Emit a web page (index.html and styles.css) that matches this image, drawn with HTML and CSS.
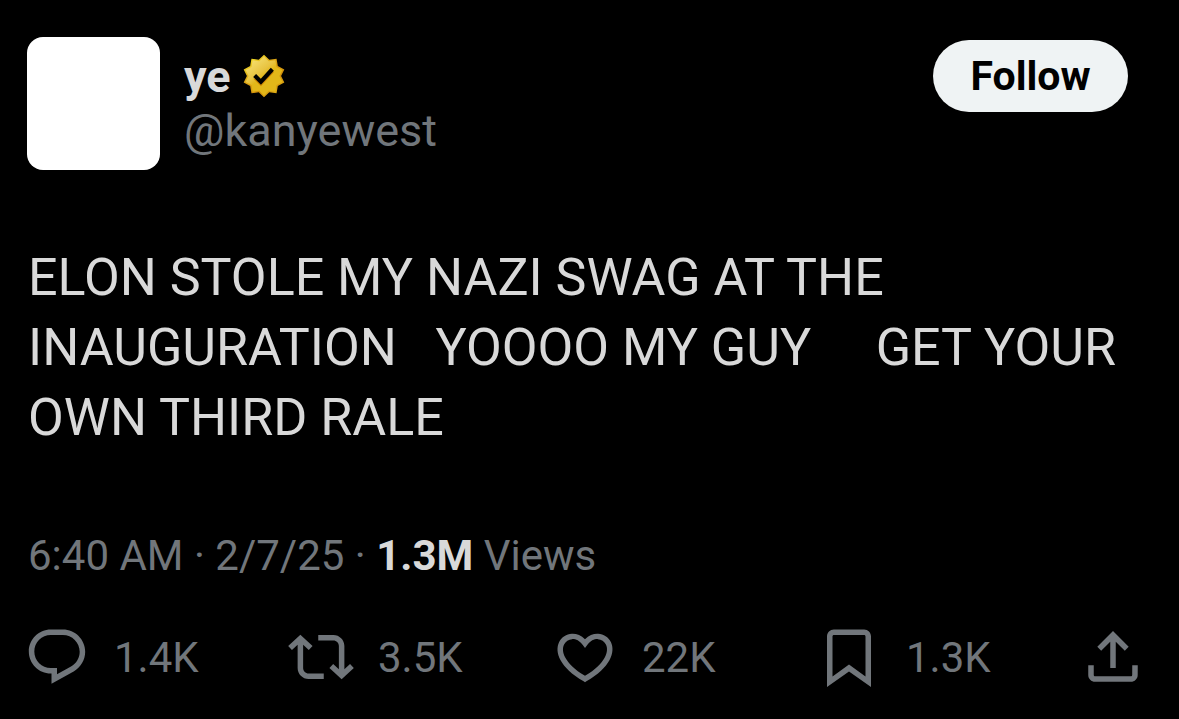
FILE: index.html
```html
<!DOCTYPE html>
<html lang="en">
<head>
    <meta charset="UTF-8">
    <meta name="viewport" content="width=device-width, initial-scale=1.0">
    <title>ye (@kanyewest)</title>
    <link rel="stylesheet" href="styles.css">
</head>
<body>
    <article class="post">
        <header class="post-header">
            <div class="avatar"></div>
            <div class="author">
                <div class="name-row">
                    <span class="name">ye</span>
                    <svg class="badge" viewBox="0 0 22 22" aria-hidden="true">
                        <defs>
                            <linearGradient id="rim" x1="4" y1="2" x2="18" y2="20" gradientUnits="userSpaceOnUse">
                                <stop offset="0" stop-color="#f4e72a"/>
                                <stop offset="0.4" stop-color="#dba012"/>
                                <stop offset="0.7" stop-color="#d18f0a"/>
                                <stop offset="1" stop-color="#e2b719"/>
                            </linearGradient>
                            <linearGradient id="gold" x1="4" y1="2" x2="18" y2="20" gradientUnits="userSpaceOnUse">
                                <stop offset="0" stop-color="#f9e87f"/>
                                <stop offset="0.4" stop-color="#e8c340"/>
                                <stop offset="0.5" stop-color="#e2b719"/>
                                <stop offset="1" stop-color="#e2b719"/>
                            </linearGradient>
                        </defs>
                        <path fill="url(#rim)" d="M13.324 3.848L11 1.6 8.676 3.848l-3.201-.453-.559 3.184L2.06 8.095 3.48 11l-1.42 2.904 2.856 1.516.559 3.184 3.201-.452L11 20.4l2.324-2.248 3.201.452.559-3.184 2.856-1.516L18.52 11l1.42-2.905-2.856-1.516-.559-3.184z"/>
                        <path fill="url(#gold)" d="M13.1 4.5L11 2.4 8.9 4.5l-2.9-.4-.5 2.9-2.6 1.4L4.2 11l-1.3 2.6L5.5 15l.5 2.9 2.9-.4L11 19.6l2.1-2.1 2.9.4.5-2.9 2.6-1.4L17.8 11l1.3-2.6L16.5 7 16 4.1z"/>
                        <path fill="#d18800" d="M6.234 12.1l3.428 3.428 5.683-6.206L14 8.2l-4.4 4.7z"/>
                        <path fill="#000" d="M6.234 11.423l3.428 3.428 5.683-6.206-1.347-1.247-4.4 4.795-2.072-2.072z"/>
                    </svg>
                </div>
                <div class="handle">@kanyewest</div>
            </div>
            <button class="follow" type="button">Follow</button>
        </header>

        <p class="text">ELON STOLE MY NAZI SWAG AT THE INAUGURATION   YOOOO MY GUY     GET YOUR OWN THIRD RALE</p>

        <div class="meta">6:40 AM · 2/7/25 · <strong>1.3M</strong> Views</div>

        <!-- Action buttons -->
        <div class="actions">
            <button class="action" type="button" aria-label="Reply, 1.4K">
                <svg viewBox="0 0 24 24"><path d="M1.751 10c0-4.42 3.584-8 8.005-8h4.366c4.49 0 8.129 3.64 8.129 8.13 0 2.96-1.607 5.68-4.196 7.11l-8.054 4.46v-3.69h-.067c-4.49.1-8.183-3.51-8.183-8.01zm8.005-6c-3.317 0-6.005 2.69-6.005 6 0 3.37 2.77 6.08 6.138 6.01l.351-.01h1.761v2.3l5.087-2.81c1.951-1.08 3.163-3.13 3.163-5.36 0-3.39-2.744-6.13-6.129-6.13H9.756z"/></svg>
                <span>1.4K</span>
            </button>
            <button class="action" type="button" aria-label="Repost, 3.5K">
                <svg viewBox="0 0 24 24"><path d="M4.5 3.88l4.432 4.14-1.364 1.46L5.5 7.55V16c0 1.1.896 2 2 2H13v2H7.5c-2.209 0-4-1.79-4-4V7.55L1.432 9.48.068 8.02 4.5 3.88zM16.5 6H11V4h5.5c2.209 0 4 1.79 4 4v8.45l2.068-1.93 1.364 1.46-4.432 4.14-4.432-4.14 1.364-1.46 2.068 1.93V8c0-1.1-.896-2-2-2z"/></svg>
                <span>3.5K</span>
            </button>
            <button class="action" type="button" aria-label="Like, 22K">
                <svg viewBox="0 0 24 24"><path d="M16.697 5.5c-1.222-.06-2.679.51-3.89 2.16l-.805 1.09-.806-1.09C9.984 6.01 8.526 5.44 7.304 5.5c-1.243.07-2.349.78-2.91 1.91-.552 1.12-.633 2.78.479 4.82 1.074 1.97 3.257 4.27 7.129 6.61 3.87-2.34 6.052-4.64 7.126-6.61 1.111-2.04 1.03-3.7.477-4.82-.561-1.13-1.666-1.84-2.908-1.91zm4.187 7.69c-1.351 2.48-4.001 5.12-8.379 7.67l-.503.3-.504-.3c-4.379-2.55-7.029-5.19-8.382-7.67-1.36-2.5-1.41-4.86-.514-6.67.887-1.79 2.647-2.91 4.601-3.01 1.651-.09 3.368.56 4.798 2.01 1.429-1.45 3.146-2.1 4.796-2.01 1.954.1 3.714 1.22 4.601 3.01.896 1.81.846 4.17-.514 6.67z"/></svg>
                <span>22K</span>
            </button>
            <button class="action" type="button" aria-label="Bookmark, 1.3K">
                <svg viewBox="0 0 24 24"><path d="M4 4.5C4 3.12 5.119 2 6.5 2h11C18.881 2 20 3.12 20 4.5v18.44l-8-5.71-8 5.71V4.5zM6.5 4c-.276 0-.5.22-.5.5v14.56l6-4.29 6 4.29V4.5c0-.28-.224-.5-.5-.5h-11z"/></svg>
                <span>1.3K</span>
            </button>
            <button class="action" type="button" aria-label="Share">
                <svg viewBox="0 0 24 24"><path d="M12 2.59l5.7 5.7-1.41 1.42L13 6.41V16h-2V6.41l-3.3 3.3-1.41-1.42L12 2.59zM21 15l-.02 3.51c0 1.38-1.12 2.49-2.5 2.49H5.5C4.11 21 3 19.88 3 18.5V15h2v3.5c0 .28.22.5.5.5h12.98c.28 0 .5-.22.5-.5L19 15h2z"/></svg>
            </button>
        </div>
    </article>
</body>
</html>
```
FILE: styles.css
```css
body {
    margin: 0;
    background-color: #000;
    color: #d9d9d9;
    font-family: Roboto, Arial, sans-serif;
}
button {
    border: none;
    padding: 0;
    font-family: inherit;
    cursor: pointer;
}
.post {
    padding: 37px 24px 29px;
}
.post-header {
    display: flex;
    align-items: flex-start;
    padding: 0 27px 0 3px;
}
.avatar {
    width: 133px;
    height: 133px;
    border-radius: 16px;
    background-color: #fff;
}
.author {
    flex-grow: 1;
    margin-left: 24px;
    padding-top: 12px;
}
.name-row {
    display: flex;
    align-items: center;
    gap: 8px;
    height: 54px;
}
.name {
    font-size: 45px;
    font-weight: 700;
}
.badge {
    width: 50px;
    height: 50px;
}
.handle {
    font-size: 45px;
    line-height: 56px;
    color: #71767b;
}
.follow {
    width: 195px;
    height: 72px;
    margin-top: 3px;
    border-radius: 36px;
    background-color: #eff3f4;
    color: #000;
    font-size: 41px;
    font-weight: 700;
}
.text {
    margin: 73px 0 0;
    padding: 0 20px 0 4px;
    font-size: 52px;
    line-height: 70px;
    white-space: pre-wrap;
}
.meta {
    margin-top: 76px;
    padding-left: 4px;
    font-size: 42px;
    line-height: 54px;
    color: #71767b;
}
.meta strong {
    color: #d9d9d9;
}
.actions {
    display: grid;
    grid-template-columns: repeat(4, 1fr) 66px;
    margin-top: 41px;
    padding-right: 9px;
}
.action {
    display: flex;
    align-items: center;
    gap: 24px;
    background: none;
    color: #71767b;
    font-size: 42px;
}
.action svg {
    width: 66px;
    height: 66px;
    fill: currentColor;
}
```
